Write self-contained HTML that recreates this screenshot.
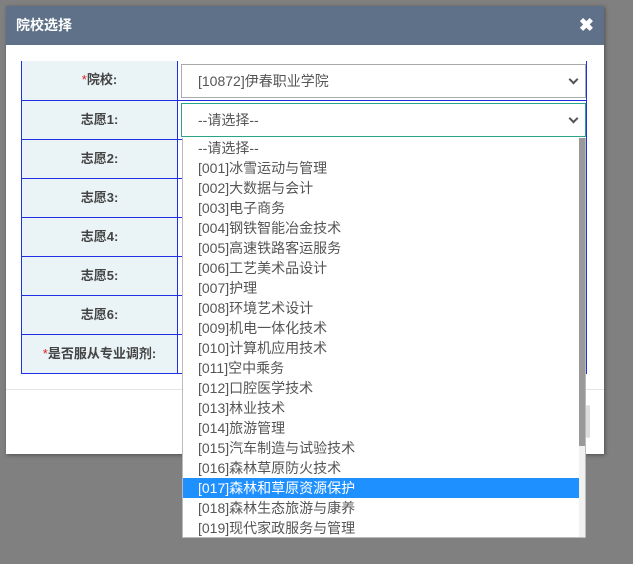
<!DOCTYPE html>
<html><head><meta charset="utf-8"><style>
body{margin:0;width:633px;height:564px;background:#808080;position:relative;overflow:hidden;font-family:"Liberation Sans","Noto Sans CJK SC",sans-serif}
.dlg{position:absolute;left:6px;top:6px;width:598px;height:448px;background:#fff;box-shadow:1px 1px 4px rgba(0,0,0,.4)}
.hd{position:absolute;left:0;top:0;width:598px;height:39px;background:#5f7189;color:#fff;font-weight:bold;font-size:14px;line-height:39px;text-indent:10px}
.x{position:absolute;right:10px;top:0;font-size:18px}
.row{position:absolute;left:21px;width:566px;border-left:1px solid #1e2fe6;border-right:1px solid #1e2fe6;border-bottom:1px solid #1e2fe6;box-sizing:border-box}
.lab{position:absolute;left:0;top:0;width:156px;height:100%;background:#eaf3f5;border-right:1px solid #1e2fe6;text-align:center;font-weight:bold;font-size:13px;color:#444;box-sizing:border-box}
.req{color:#e02020;font-weight:normal}
.sel{position:absolute;left:181px;width:405px;height:34px;box-sizing:border-box;border:1px solid #aaa;font-size:14px;color:#555;line-height:32px;padding-left:16px;background:#fff}
.sel:after{content:"";position:absolute;right:8px;top:11px;width:5px;height:5px;border-right:2px solid #555;border-bottom:2px solid #555;transform:rotate(45deg)}
.list{position:absolute;left:182px;top:138px;width:404px;height:400px;background:#fff;border:1px solid #bbb;border-top:none;box-sizing:border-box;font-size:14px;color:#555}
.list .it{height:20px;line-height:20px;padding-left:15px;white-space:nowrap;width:382px}
.list .hl{background:#1e90ff;color:#fff}
.sb{position:absolute;right:0;top:0;width:6px;height:399px;background:#f1f1f1}
.th{position:absolute;left:0;top:0;width:6px;height:308px;background:#999}
</style></head><body>
<div class="dlg"><div class="hd">院校选择<span class="x">✖</span></div>
<div style="position:absolute;left:0;top:383px;width:598px;height:1px;background:#e5e5e5"></div>
<div style="position:absolute;left:580px;top:399px;width:4px;height:33px;background:#ddd;border-radius:2px"></div>
</div>
<div class="row" style="top:61px;height:40px"><div class="lab" style="line-height:38px"><span class="req">*</span>院校:</div></div>
<div class="row" style="top:101px;height:39px"><div class="lab" style="line-height:37px">志愿1:</div></div>
<div class="row" style="top:140px;height:39px"><div class="lab" style="line-height:37px">志愿2:</div></div>
<div class="row" style="top:179px;height:39px"><div class="lab" style="line-height:37px">志愿3:</div></div>
<div class="row" style="top:218px;height:39px"><div class="lab" style="line-height:37px">志愿4:</div></div>
<div class="row" style="top:257px;height:39px"><div class="lab" style="line-height:37px">志愿5:</div></div>
<div class="row" style="top:296px;height:39px"><div class="lab" style="line-height:37px">志愿6:</div></div>
<div class="row" style="top:335px;height:39px"><div class="lab" style="line-height:37px"><span class="req">*</span>是否服从专业调剂:</div></div>
<div class="sel" style="top:64px">[10872]伊春职业学院</div>
<div class="sel" style="top:103px;border-color:#2aa58a">--请选择--</div>
<div class="list">
<div class="it">--请选择--</div><div class="it">[001]冰雪运动与管理</div><div class="it">[002]大数据与会计</div><div class="it">[003]电子商务</div><div class="it">[004]钢铁智能冶金技术</div><div class="it">[005]高速铁路客运服务</div><div class="it">[006]工艺美术品设计</div><div class="it">[007]护理</div><div class="it">[008]环境艺术设计</div><div class="it">[009]机电一体化技术</div><div class="it">[010]计算机应用技术</div><div class="it">[011]空中乘务</div><div class="it">[012]口腔医学技术</div><div class="it">[013]林业技术</div><div class="it">[014]旅游管理</div><div class="it">[015]汽车制造与试验技术</div><div class="it">[016]森林草原防火技术</div><div class="it hl">[017]森林和草原资源保护</div><div class="it">[018]森林生态旅游与康养</div><div class="it">[019]现代家政服务与管理</div>
<div class="sb"><div class="th"></div></div>
</div>
</body></html>
